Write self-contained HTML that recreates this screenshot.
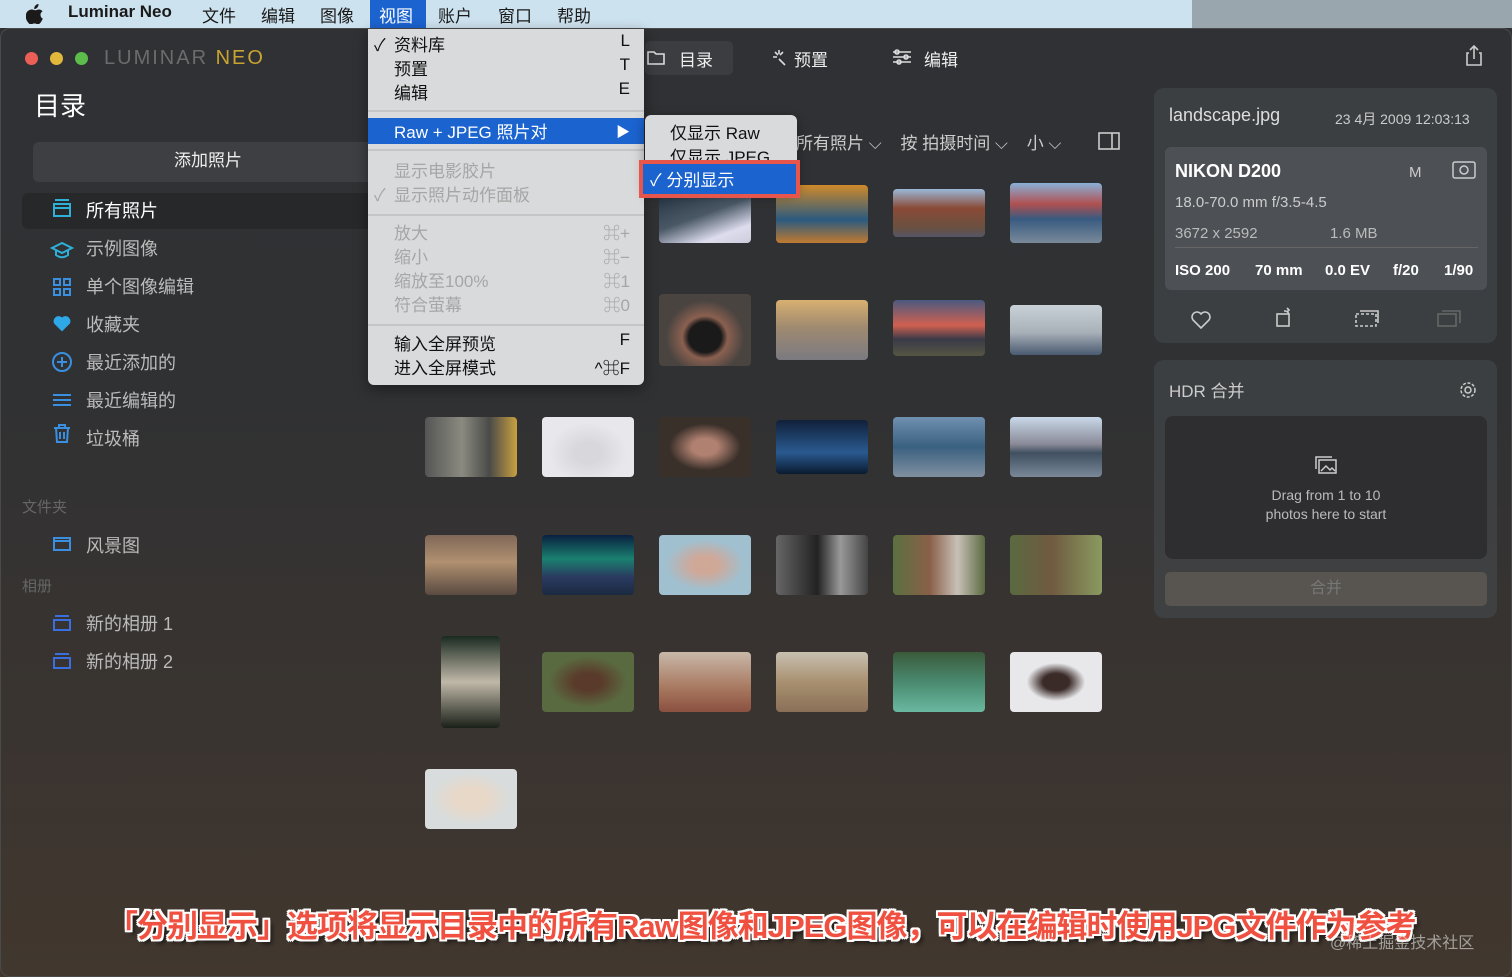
<!DOCTYPE html>
<html><head><meta charset="utf-8"><style>
*{margin:0;padding:0;box-sizing:border-box}
body{width:1512px;height:977px;overflow:hidden;font-family:"Liberation Sans","Noto Sans CJK SC",sans-serif;background:linear-gradient(180deg,#2f3134 0%,#303133 40%,#3a3430 75%,#41372e 100%);position:relative;color:#ddd}
.abs{position:absolute}
.menubar{left:0;top:0;width:1192px;height:28px;background:#cde2ef;font-size:17px;color:#1a1a1a}
.menubar span{position:absolute;top:2px}
.mb2{left:1192px;top:0;width:320px;height:28px;background:#9aa6ae}
.win{left:0;top:28px;width:1512px;height:949px;border-radius:10px;border:1px solid #4a4a4a}
.side span{position:absolute;font-size:18px;color:#bbb}
.menu{left:368px;top:29px;width:276px;height:356px;background:#d9dadb;border-radius:0 0 6px 6px;font-size:17px;color:#111;box-shadow:0 4px 14px rgba(0,0,0,.4)}
.menu div{position:absolute;left:26px}
.menu .r{left:auto;right:14px}
.menu .g{color:#a6a6a6}
.sep{position:absolute;left:0!important;width:276px;height:2px;background:#c4c5c6}
.th{position:absolute;border-radius:4px}
.rp{background:rgba(70,74,78,.55);border-radius:10px}
.iso{position:absolute;top:262px;font-size:15px;color:#fff;font-weight:bold}
</style></head><body>
<div class="abs menubar">
<svg class="abs" style="left:26px;top:4px" width="18" height="20" viewBox="0 0 18 20"><path fill="#1a1a1a" d="M12.5 0c.2 1.4-.4 2.7-1.2 3.6-.8.9-2 1.5-3.1 1.4-.2-1.3.4-2.6 1.2-3.5C10.2.6 11.5 0 12.5 0zM16.8 14.6c-.5 1.1-.7 1.6-1.3 2.6-.9 1.4-2.1 3.1-3.6 3.1-1.3 0-1.7-.9-3.5-.8-1.8 0-2.2.8-3.6.8-1.5 0-2.6-1.5-3.5-2.9C-1.2 13.5-.6 8.4 2.6 6.5c1.1-.7 2.3-1 3.4-1 1.3 0 2.2.8 3.5.8 1.2 0 1.9-.8 3.6-.8 1.2 0 2.6.7 3.5 1.8-3.1 1.7-2.6 6.1.2 7.3z"/></svg>
<span style="left:68px;font-weight:bold">Luminar Neo</span>
<span style="left:202px">文件</span><span style="left:261px">编辑</span><span style="left:320px">图像</span>
<div class="abs" style="left:370px;top:0;width:56px;height:28px;background:#1b63cf"></div>
<span style="left:379px;color:#fff">视图</span>
<span style="left:438px">账户</span><span style="left:498px">窗口</span><span style="left:557px">帮助</span>
</div>
<div class="abs mb2"></div>
<div class="abs win"></div>
<div class="abs" style="left:25px;top:52px;width:13px;height:13px;border-radius:50%;background:#ec5f57"></div>
<div class="abs" style="left:50px;top:52px;width:13px;height:13px;border-radius:50%;background:#e1b73c"></div>
<div class="abs" style="left:75px;top:52px;width:13px;height:13px;border-radius:50%;background:#5cbd4b"></div>
<div class="abs" style="left:104px;top:47px;font-size:20px;letter-spacing:2px;color:#6c6c6c">LUMINAR <span style="color:#c9a431">NEO</span></div>
<div class="abs" style="left:34px;top:86px;font-size:26px;color:#fff">目录</div>
<div class="abs" style="left:33px;top:142px;width:350px;height:40px;background:#3d3f42;border-radius:6px;text-align:center;line-height:38px;font-size:17px;color:#eee">添加照片</div>
<div class="abs" style="left:22px;top:193px;width:350px;height:36px;background:#26282a;border-radius:6px"></div>
<div class="side">
<span style="left:86px;top:197px;color:#fff">所有照片</span>
<span style="left:86px;top:235px">示例图像</span>
<span style="left:86px;top:273px">单个图像编辑</span>
<span style="left:86px;top:311px">收藏夹</span>
<span style="left:86px;top:349px">最近添加的</span>
<span style="left:86px;top:387px">最近编辑的</span>
<span style="left:86px;top:425px">垃圾桶</span>
<span style="left:22px;top:496px;font-size:15px;color:#666">文件夹</span>
<span style="left:86px;top:532px">风景图</span>
<span style="left:22px;top:575px;font-size:15px;color:#666">相册</span>
<span style="left:86px;top:610px">新的相册 1</span>
<span style="left:86px;top:648px">新的相册 2</span>
</div>
<svg class="abs" style="left:50px;top:195px" width="28" height="480" fill="none" stroke="#2fb0d8" stroke-width="2">
<rect x="4" y="9" width="16" height="12"/><path d="M5 5h14M4 13h16"/>
<path d="M2 53l10-5 10 5-10 5z M6 55v5c4 3 8 3 12 0v-5"/>
<g stroke="#3a8fe0"><rect x="4" y="84" width="6" height="6"/><rect x="14" y="84" width="6" height="6"/><rect x="4" y="94" width="6" height="6"/><rect x="14" y="94" width="6" height="6"/></g>
<path d="M12 135l-7-7a4 4 0 016-5l1 1 1-1a4 4 0 016 5z" fill="#2fa8e8" stroke="#2fa8e8"/>
<circle cx="12" cy="167" r="9" stroke="#3a8fe0"/><path d="M12 162v10M7 167h10" stroke="#3a8fe0"/>
<path d="M3 200h18M3 205h18M3 210h18" stroke="#3a8fe0"/>
<path d="M4 233h16M9 233v-3h6v3M6 233l1 14h10l1-14M10 237v7M14 237v7" stroke="#3a8fe0"/>
<path d="M4 343h16v12H4zM4 346h16" stroke="#3a8fe0"/>
<path d="M4 425h16v10H4zM5 421h14" stroke="#3a6fe0"/>
<path d="M4 463h16v10H4zM5 459h14" stroke="#3a6fe0"/>
</svg>
<!-- top tabs -->
<div class="abs" style="left:645px;top:41px;width:88px;height:34px;background:#3b3d40;border-radius:5px"></div>
<div class="abs" style="left:679px;top:46px;font-size:17px;color:#eee">目录</div>
<div class="abs" style="left:794px;top:46px;font-size:17px;color:#eee">预置</div>
<div class="abs" style="left:924px;top:46px;font-size:17px;color:#eee">编辑</div>
<svg class="abs" style="left:645px;top:47px" width="310" height="22" fill="none" stroke="#ddd" stroke-width="1.6">
<path d="M3 5h6l2 2h8v10H3z"/><path d="M130 5l3 3M134 3v4M138 5l-3 3M128 10h4M134 12l6 6"/>
<path d="M248 5h18M248 10h18M248 15h18"/><circle cx="252" cy="5" r="2"/><circle cx="261" cy="10" r="2"/><circle cx="254" cy="15" r="2"/>
</svg>
<svg class="abs" style="left:1464px;top:44px" width="20" height="24" fill="none" stroke="#ccc" stroke-width="1.6"><path d="M10 2v13M6 6l4-4 4 4M5 9H3v12h14V9h-2"/></svg>
<div class="abs" style="left:796px;top:129px;font-size:17px;color:#ccc">所有照片 ⌵&nbsp;&nbsp;&nbsp;&nbsp;按 拍摄时间 ⌵&nbsp;&nbsp;&nbsp;&nbsp;小 ⌵</div>
<svg class="abs" style="left:1097px;top:131px" width="24" height="20" fill="none" stroke="#ccc" stroke-width="1.6"><rect x="2" y="2" width="20" height="16"/><path d="M15 2v16"/></svg>
<!-- thumbnails -->
<div class="th" style="left:659px;top:185px;width:92px;height:58px;background:linear-gradient(160deg,#1c2a3a,#4a5866 50%,#dde 80%,#ccd)"></div>
<div class="th" style="left:776px;top:185px;width:92px;height:58px;background:linear-gradient(180deg,#d08a2a,#2a5a80 60%,#c07a30)"></div>
<div class="th" style="left:893px;top:189px;width:92px;height:48px;background:linear-gradient(180deg,#9ab8d8,#8a4a36 40%,#6a5040 80%,#556)"></div>
<div class="th" style="left:1010px;top:183px;width:92px;height:60px;background:linear-gradient(180deg,#8ab0d8,#b05050 35%,#385a80 60%,#7a8a9a)"></div>
<div class="th" style="left:659px;top:294px;width:92px;height:72px;background:radial-gradient(ellipse at 50% 60%,#1a1a1a 25%,#8a6050 35%,#4a4440 60%)"></div>
<div class="th" style="left:776px;top:300px;width:92px;height:60px;background:linear-gradient(180deg,#d8b070,#a08a70 45%,#7a7a80)"></div>
<div class="th" style="left:893px;top:300px;width:92px;height:56px;background:linear-gradient(180deg,#4a5a80,#d06050 45%,#3a3a48 70%,#554)"></div>
<div class="th" style="left:1010px;top:305px;width:92px;height:50px;background:linear-gradient(180deg,#c8d0d8,#a8b0b8 55%,#4a5a70)"></div>
<div class="th" style="left:425px;top:417px;width:92px;height:60px;background:linear-gradient(90deg,#555,#8a8a80 40%,#4a4a48 70%,#c8a040)"></div>
<div class="th" style="left:542px;top:417px;width:92px;height:60px;background:radial-gradient(ellipse at 50% 60%,#d8d8dc 20%,#e8e8ec 60%)"></div>
<div class="th" style="left:659px;top:417px;width:92px;height:60px;background:radial-gradient(ellipse at 50% 50%,#b08070 20%,#3a302a 55%)"></div>
<div class="th" style="left:776px;top:420px;width:92px;height:54px;background:linear-gradient(180deg,#10203a,#2a5a90 60%,#0a1a30)"></div>
<div class="th" style="left:893px;top:417px;width:92px;height:60px;background:linear-gradient(180deg,#7090b0,#3a6080 50%,#8090a0)"></div>
<div class="th" style="left:1010px;top:417px;width:92px;height:60px;background:linear-gradient(180deg,#c8d8e8,#8a8a98 45%,#405060 60%,#7a8898)"></div>
<div class="th" style="left:425px;top:535px;width:92px;height:60px;background:linear-gradient(180deg,#806858,#b09070 45%,#5a4a40)"></div>
<div class="th" style="left:542px;top:535px;width:92px;height:60px;background:linear-gradient(180deg,#0a2040,#1a8070 40%,#2a3a60 70%,#1a2a40)"></div>
<div class="th" style="left:659px;top:535px;width:92px;height:60px;background:radial-gradient(ellipse at 50% 50%,#d0a898 20%,#a0c0d0 60%)"></div>
<div class="th" style="left:776px;top:535px;width:92px;height:60px;background:linear-gradient(90deg,#666,#222 45%,#999 70%,#444)"></div>
<div class="th" style="left:893px;top:535px;width:92px;height:60px;background:linear-gradient(90deg,#5a7040,#8a6048 40%,#c8c0b8 70%,#5a6a40)"></div>
<div class="th" style="left:1010px;top:535px;width:92px;height:60px;background:linear-gradient(90deg,#5a6a40,#705a40 45%,#8a9a60)"></div>
<div class="th" style="left:441px;top:636px;width:59px;height:92px;background:linear-gradient(180deg,#1a2a20,#c0b8a8 50%,#1a2018)"></div>
<div class="th" style="left:542px;top:652px;width:92px;height:60px;background:radial-gradient(ellipse at 50% 50%,#5a3a2a 20%,#5a6a40 60%)"></div>
<div class="th" style="left:659px;top:652px;width:92px;height:60px;background:linear-gradient(180deg,#c8b8a8,#a87860 60%,#8a5040)"></div>
<div class="th" style="left:776px;top:652px;width:92px;height:60px;background:linear-gradient(180deg,#c8c0b0,#a89070 50%,#8a7058)"></div>
<div class="th" style="left:893px;top:652px;width:92px;height:60px;background:linear-gradient(180deg,#3a5a3a,#4a8a70 50%,#6ab8a0)"></div>
<div class="th" style="left:1010px;top:652px;width:92px;height:60px;background:radial-gradient(ellipse at 50% 50%,#3a2a28 20%,#e8e8ea 45%)"></div>
<div class="th" style="left:425px;top:769px;width:92px;height:60px;background:radial-gradient(ellipse at 50% 50%,#e8d8c8 25%,#d8dcdc 60%)"></div>
<!-- right panel -->
<div class="abs rp" style="left:1154px;top:88px;width:343px;height:255px"></div>
<div class="abs" style="left:1169px;top:105px;font-size:18px;color:#ddd">landscape.jpg</div>
<div class="abs" style="left:1335px;top:109px;font-size:14px;color:#ccc">23 4月 2009 12:03:13</div>
<div class="abs" style="left:1165px;top:147px;width:322px;height:143px;background:rgba(90,94,98,.6);border-radius:6px"></div>
<div class="abs" style="left:1175px;top:161px;font-size:18px;color:#fff;font-weight:bold">NIKON D200</div>
<div class="abs" style="left:1409px;top:164px;font-size:15px;color:#ccc">M</div>
<svg class="abs" style="left:1452px;top:160px" width="24" height="20" fill="none" stroke="#ccc" stroke-width="1.5"><rect x="1" y="2" width="22" height="16" rx="2"/><circle cx="12" cy="10" r="4"/></svg>
<div class="abs" style="left:1175px;top:194px;font-size:15px;color:#ccc">18.0-70.0 mm f/3.5-4.5</div>
<div class="abs" style="left:1175px;top:225px;font-size:15px;color:#bbb">3672 x 2592</div>
<div class="abs" style="left:1330px;top:225px;font-size:15px;color:#bbb">1.6 MB</div>
<div class="abs" style="left:1175px;top:247px;width:303px;height:1px;background:#666"></div>
<div class="iso" style="left:1175px">ISO 200</div>
<div class="iso" style="left:1255px">70 mm</div>
<div class="iso" style="left:1325px">0.0 EV</div>
<div class="iso" style="left:1393px">f/20</div>
<div class="iso" style="left:1444px">1/90</div>
<svg class="abs" style="left:1188px;top:305px" width="280" height="28" fill="none" stroke="#ccc" stroke-width="1.6">
<path d="M13 23l-8-8a5 5 0 017-7l1 1 1-1a5 5 0 017 7z"/>
<rect x="89" y="9" width="12" height="12"/><path d="M96 6a5 5 0 015 3M99 3l2 2-2 2"/>
<rect x="168" y="9" width="20" height="12" stroke-dasharray="3 2"/><path d="M172 6h18v12"/>
<g stroke="#666"><rect x="250" y="9" width="18" height="12"/><path d="M254 6h18v12"/></g>
</svg>
<div class="abs rp" style="left:1154px;top:360px;width:343px;height:258px"></div>
<div class="abs" style="left:1169px;top:377px;font-size:17px;color:#ccc">HDR 合并</div>
<svg class="abs" style="left:1457px;top:379px" width="22" height="22" fill="none" stroke="#ccc" stroke-width="1.5"><circle cx="11" cy="11" r="3"/><circle cx="11" cy="11" r="7" stroke-dasharray="3 1.6"/></svg>
<div class="abs" style="left:1165px;top:416px;width:322px;height:143px;background:rgba(40,40,42,.7);border-radius:8px"></div>
<svg class="abs" style="left:1314px;top:455px" width="24" height="20" fill="none" stroke="#ccc" stroke-width="1.5"><rect x="5" y="5" width="17" height="13"/><path d="M2 14V2h16"/><path d="M7 16l5-5 4 4 2-2 3 3"/></svg>
<div class="abs" style="left:1165px;top:486px;width:322px;text-align:center;font-size:14px;color:#bbb;line-height:19px">Drag from 1 to 10<br>photos here to start</div>
<div class="abs" style="left:1165px;top:572px;width:322px;height:34px;background:rgba(120,110,100,.45);border-radius:5px;text-align:center;line-height:34px;color:#777;font-size:16px">合并</div>
<!-- menu -->
<div class="abs menu">
<div style="left:6px;top:2px">✓</div>
<div style="top:2px">资料库</div><div class="r" style="top:2px">L</div>
<div style="top:26px">预置</div><div class="r" style="top:26px">T</div>
<div style="top:50px">编辑</div><div class="r" style="top:50px">E</div>
<div class="sep" style="top:81px"></div>
<div style="left:0;top:89px;width:276px;height:26px;background:#1b63cf"></div>
<div style="top:89px;color:#fff">Raw + JPEG 照片对</div><div class="r" style="color:#fff;font-size:14px;top:93px">▶</div>
<div class="sep" style="top:120px"></div>
<div class="g" style="top:128px">显示电影胶片</div>
<div class="g" style="left:6px;top:152px">✓</div><div class="g" style="top:152px">显示照片动作面板</div>
<div class="sep" style="top:185px"></div>
<div class="g" style="top:190px">放大</div><div class="g r" style="top:190px">⌘+</div>
<div class="g" style="top:214px">缩小</div><div class="g r" style="top:214px">⌘−</div>
<div class="g" style="top:238px">缩放至100%</div><div class="g r" style="top:238px">⌘1</div>
<div class="g" style="top:262px">符合萤幕</div><div class="g r" style="top:262px">⌘0</div>
<div class="sep" style="top:295px"></div>
<div style="top:301px">输入全屏预览</div><div class="r" style="top:301px">F</div>
<div style="top:325px">进入全屏模式</div><div class="r" style="top:325px">^⌘F</div>
</div>
<div class="abs" style="left:645px;top:115px;width:152px;height:76px;background:#d9dadb;border-radius:6px;box-shadow:0 4px 12px rgba(0,0,0,.4)"></div>
<div class="abs" style="left:670px;top:119px;font-size:17px;color:#111">仅显示 Raw</div>
<div class="abs" style="left:670px;top:143px;font-size:17px;color:#111;height:17px;overflow:hidden">仅显示 JPEG</div>
<div class="abs" style="left:639px;top:160px;width:161px;height:38px;border:4px solid #e8554a;background:#1b63cf"></div>
<div class="abs" style="left:650px;top:166px;font-size:17px;color:#fff">✓ 分别显示</div>
<!-- caption -->
<div class="abs" style="left:107px;top:901px;font-size:31px;font-weight:bold;color:#f05040;letter-spacing:-1px;text-shadow:2px 2px 0 #fff,-2px -2px 0 #fff,2px -2px 0 #fff,-2px 2px 0 #fff,0 2px 0 #fff,2px 0 0 #fff,0 -2px 0 #fff,-2px 0 0 #fff,4px 4px 4px rgba(0,0,0,.6)">「分别显示」选项将显示目录中的所有Raw图像和JPEG图像，可以在编辑时使用JPG文件作为参考</div>
<div class="abs" style="left:1330px;top:929px;font-size:16px;color:rgba(230,230,230,.6)">@稀土掘金技术社区</div>
</body></html>
